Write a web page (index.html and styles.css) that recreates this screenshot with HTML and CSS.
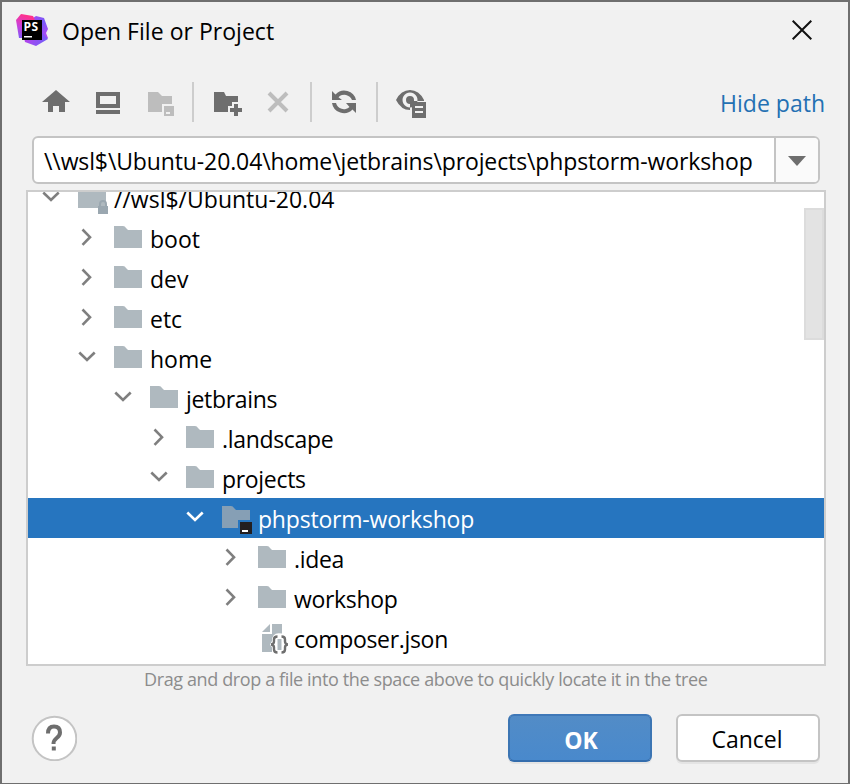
FILE: index.html
```html
<!DOCTYPE html>
<html lang="en">
<head>
    <meta charset="UTF-8">
    <title>Open File or Project</title>
    <link rel="stylesheet" href="styles.css">
</head>
<body>

    <!-- shared icon shapes -->
    <svg class="symbols" width="0" height="0">
        <symbol id="folder" viewBox="0 0 32 32"><path d="M2 4h9q2 0 3 2l2 2h14v18H2z"/></symbol>
        <symbol id="closed" viewBox="0 0 32 32"><path d="M11.500 8.500l7.500 7.700-7.500 7.700"/></symbol>
        <symbol id="opened" viewBox="0 0 32 32"><path d="M8.300 11.500l7.700 7.500 7.700-7.500"/></symbol>
    </svg>

    <div class="dialog">
        <div class="titlebar">
            <svg class="logo" width="32" height="32" viewBox="0 0 32 32">
                <defs>
                    <linearGradient id="purple" x1="0" y1="0" x2="0.6" y2="1">
                        <stop offset="0" stop-color="#b345f1"/>
                        <stop offset="0.5" stop-color="#765af8"/>
                        <stop offset="1" stop-color="#b345f1"/>
                    </linearGradient>
                    <linearGradient id="pink" x1="0.3" y1="0" x2="0" y2="1">
                        <stop offset="0" stop-color="#ff318c"/>
                        <stop offset="0.5" stop-color="#c840dc"/>
                        <stop offset="1" stop-color="#765af8"/>
                    </linearGradient>
                    <linearGradient id="violet" x1="0" y1="0" x2="1" y2="0.3">
                        <stop offset="0" stop-color="#c23ee8"/>
                        <stop offset="1" stop-color="#765af8"/>
                    </linearGradient>
                </defs>
                <path fill="url(#purple)" d="M17 4l3-2 8 2 4 11-2 4 2 5-8 4H12z"/>
                <path fill="url(#violet)" d="M8 24l18-6 6 7-12 7-11-4z"/>
                <path fill="url(#pink)" d="M0 6l5-6 12 2 2 4-9 18-7 0z"/>
                <path d="M6 6h20v20H6z"/>
                <path fill="#fff" d="M8 22h8v1.500H8z"/>
                <text class="logo-text" x="7.500" y="16.800">PS</text>
            </svg>
            <h1 class="title">Open File or Project</h1>
            <svg class="close" width="20" height="20" viewBox="0 0 20 20"><path d="M.7.700l18.600 18.600M19.300.700L.7 19.300"/></svg>
        </div>

        <div class="toolbar">
            <svg class="tool" viewBox="0 0 32 32"><path d="M16 4l14 12h-5v10h-6v-6h-6v6H8V16H2z"/></svg>
            <svg class="tool" viewBox="0 0 32 32"><path fill-rule="evenodd" d="M4 6h24v16H4zM8 10v8h16v-8zM4 24h24v4H4z"/></svg>
            <svg class="tool disabled" viewBox="0 0 32 32"><path d="M4 6h10l4 4h10v8H18v8H4z"/><path fill-rule="evenodd" d="M20 20h10v10H20zM22 26v2h4v-2z"/></svg>
            <span class="separator"></span>
            <svg class="tool" viewBox="0 0 32 32"><path d="M4 6h10l2 4h12v6h-6v4h-4v6H4z"/><path d="M24 18h4v4h4v4h-4v4h-4v-4h-4v-4h4z"/></svg>
            <svg class="tool disabled cross" viewBox="0 0 32 32"><path d="M7 7l18 18M25 7L7 25"/></svg>
            <span class="separator"></span>
            <svg class="tool" viewBox="0 0 32 32"><path d="M4 5l3.500 3.500A12 12 0 0 1 28 14h-4A8.200 8.200 0 0 0 10.500 11.200L14 14H4z"/><path d="M28 27l-3.500-3.500A12 12 0 0 1 4 17h4a8.200 8.200 0 0 0 13.500 4L18 17h10z"/></svg>
            <span class="separator"></span>
            <svg class="tool" viewBox="0 0 32 32"><path fill-rule="evenodd" d="M2 14q5-10 14-10t14 10v1H16v9Q7 24 2 14zM16 6.500a7.500 7.500 0 1 0 .01 0z"/><path d="M16 10a4 4 0 0 1 4 4v1h-4v3a4 4 0 0 1 0-8z"/><path fill-rule="evenodd" d="M18 16h14v16H18zM21 20v2h8v-2zM21 25v2h8v-2z"/></svg>
            <a class="hide-path">Hide path</a>
        </div>

        <div class="path-field">
            <span class="path">\\wsl$\Ubuntu-20.04\home\jetbrains\projects\phpstorm-workshop</span>
            <span class="dropdown"><svg width="18" height="10" viewBox="0 0 18 10"><path d="M0 0h18L9 10z"/></svg></span>
        </div>

        <div class="tree">
            <ul class="rows">
                <li class="row level-0">
                    <svg class="arrow"><use href="#opened"/></svg>
                    <svg class="icon" viewBox="0 0 32 32"><path d="M2 4h9q2 0 3 2l2 2h14v16h-8v2H2z"/><path class="lock" d="M22 24h10v8H22z"/><path class="shackle" d="M24 24v-2a3 3 0 0 1 6 0v2"/></svg>
                    <span>//wsl$/Ubuntu-20.04</span>
                </li>
                <li class="row level-1"><svg class="arrow"><use href="#closed"/></svg><svg class="icon"><use href="#folder"/></svg><span>boot</span></li>
                <li class="row level-1"><svg class="arrow"><use href="#closed"/></svg><svg class="icon"><use href="#folder"/></svg><span>dev</span></li>
                <li class="row level-1"><svg class="arrow"><use href="#closed"/></svg><svg class="icon"><use href="#folder"/></svg><span>etc</span></li>
                <li class="row level-1"><svg class="arrow"><use href="#opened"/></svg><svg class="icon"><use href="#folder"/></svg><span>home</span></li>
                <li class="row level-2"><svg class="arrow"><use href="#opened"/></svg><svg class="icon"><use href="#folder"/></svg><span>jetbrains</span></li>
                <li class="row level-3"><svg class="arrow"><use href="#closed"/></svg><svg class="icon"><use href="#folder"/></svg><span>.landscape</span></li>
                <li class="row level-3"><svg class="arrow"><use href="#opened"/></svg><svg class="icon"><use href="#folder"/></svg><span>projects</span></li>
                <li class="row level-4 selected">
                    <svg class="arrow"><use href="#opened"/></svg>
                    <svg class="icon" viewBox="0 0 32 32"><path d="M2 4h9q2 0 3 2l2 2h14v10H18v8H2z"/><path fill="#231f20" d="M20 20h12v12H20z"/><path fill="#fff" d="M22 28h6v2h-6z"/></svg>
                    <span>phpstorm-workshop</span>
                </li>
                <li class="row level-5"><svg class="arrow"><use href="#closed"/></svg><svg class="icon"><use href="#folder"/></svg><span>.idea</span></li>
                <li class="row level-5"><svg class="arrow"><use href="#closed"/></svg><svg class="icon"><use href="#folder"/></svg><span>workshop</span></li>
                <li class="row level-5">
                    <svg class="arrow"></svg>
                    <svg class="icon" viewBox="0 0 32 32"><path d="M14 2v8H6z"/><path d="M16 2h10v9.500q-10-2-10 7.500l-2 3.500 2 3v4.500H6V12h10z"/><path d="M21.500 17h4v11h-4z"/><path class="braces" d="M21.500 14.500q-3.500 0-3.500 3v2q0 2.500-2.800 3 2.800.5 2.800 3v2q0 3 3.500 3M25.500 14.500q3.500 0 3.500 3v2q0 2.500 2.800 3-2.800.5-2.800 3v2q0 3-3.500 3"/></svg>
                    <span>composer.json</span>
                </li>
            </ul>
            <div class="scrollbar"></div>
        </div>

        <p class="hint">Drag and drop a file into the space above to quickly locate it in the tree</p>

        <div class="buttons">
            <svg class="help" width="46" height="46" viewBox="0 0 46 46">
                <circle cx="23.500" cy="23.500" r="21.800"/>
                <path class="hook" d="M17 18.500q0-7 6-7t6 6q0 3-3.300 5.500t-3.200 6"/>
                <path class="dot" d="M20.800 31.500h4v4h-4z"/>
            </svg>
            <button class="button primary">OK</button>
            <button class="button">Cancel</button>
        </div>
    </div>

</body>
</html>
```
FILE: styles.css
```css
* {
    box-sizing: border-box;
}

body {
    margin: 0;
    font-family: "Open Sans", "Noto Sans", sans-serif;
    font-size: 23px;
    letter-spacing: -0.12px;
    color: #000;
}

.symbols {
    position: absolute;
}

.dialog {
    width: 850px;
    height: 784px;
    background-color: #f1f1f1;
    border: 2px solid #6f6f6f;
    border-bottom-width: 1px;
    overflow: hidden;
}

.titlebar {
    display: flex;
    align-items: center;
    height: 56px;
    padding: 0 36px 0 14px;
}

.logo-text {
    font: bold 12px "Open Sans", sans-serif;
    letter-spacing: 0.5px;
    fill: #fff;
}

.title {
    flex: 1;
    margin: 2px 0 0 14px;
    font-size: 23px;
    font-weight: normal;
    letter-spacing: 0.03px;
}

.close {
    fill: none;
    stroke: #111;
    stroke-width: 2;
}

.toolbar {
    display: flex;
    align-items: center;
    height: 60px;
    margin-top: 14px;
    padding: 0 23px 0 38px;
}

.tool {
    width: 32px;
    height: 32px;
    margin-right: 20px;
    fill: #6e6e6e;
}

.tool.disabled {
    fill: #bdbdbd;
}

.tool.cross {
    fill: none;
    stroke: #bdbdbd;
    stroke-width: 4;
}

.separator {
    width: 2px;
    height: 40px;
    margin: 0 16px 0 -4px;
    background-color: #cdcdcd;
}

.hide-path {
    margin: 2px 0 0 auto;
    letter-spacing: 0;
    color: #2470b3;
}

.path-field {
    display: flex;
    width: 788px;
    height: 48px;
    margin: 4px 0 0 30px;
    background-color: #fff;
    border: 2px solid #c4c4c4;
    border-radius: 6px;
}

.path {
    flex: 1;
    padding-left: 10px;
    line-height: 47px;
    white-space: nowrap;
}

.dropdown {
    display: flex;
    align-items: center;
    justify-content: center;
    width: 44px;
    padding-top: 2px;
    background-color: #fafafa;
    border-left: 2px solid #c4c4c4;
    border-radius: 0 4px 4px 0;
    fill: #6e6e6e;
}

.tree {
    position: relative;
    width: 800px;
    height: 476px;
    margin: 6px 0 0 24px;
    background-color: #fff;
    border: 2px solid #cdcdcd;
    overflow: hidden;
}

.rows {
    margin: -14px 0 0;
    padding: 0;
    list-style: none;
}

.row {
    display: flex;
    height: 40px;
    line-height: 43px;
    letter-spacing: -0.32px;
    white-space: nowrap;
}

.level-0 { padding-left: 7px; letter-spacing: 0; }
.level-1 { padding-left: 43px; letter-spacing: 0; }
.level-2 { padding-left: 79px; }
.level-3 { padding-left: 115px; }
.level-4 { padding-left: 151px; }
.level-5 { padding-left: 187px; }

.arrow {
    width: 32px;
    height: 32px;
    margin: 3px 9px 0 0;
    fill: none;
    stroke: #7f7f7f;
    stroke-width: 2.6;
}

.icon {
    width: 32px;
    height: 32px;
    margin: 4px 6px 0 0;
    fill: #afb9bf;
}

.icon .lock {
    fill: #9aa7b0;
}

.shackle {
    fill: none;
    stroke: #9aa7b0;
    stroke-width: 2;
}

.braces {
    fill: none;
    stroke: #6e6e6e;
    stroke-width: 2.4;
}

.selected {
    background-color: #2675bf;
    letter-spacing: -0.2px;
    color: #fff;
}

.selected .arrow {
    stroke: #fff;
}

.selected .icon {
    fill: #869fb5;
}

.scrollbar {
    position: absolute;
    top: 16px;
    right: 0;
    width: 20px;
    height: 132px;
    background-color: #e3e3e3;
    border: 2px solid #dcdcdc;
}

.hint {
    margin: -1px 0 0 142px;
    font-size: 18px;
    line-height: 28px;
    letter-spacing: -0.38px;
    color: #8c8c8c;
    white-space: nowrap;
}

.buttons {
    display: flex;
    align-items: center;
    height: 48px;
    margin: 21px 28px 0 29px;
}

.help {
    margin-right: auto;
    fill: #fff;
    stroke: #c4c4c4;
    stroke-width: 2;
}

.help .hook {
    fill: none;
    stroke: #6e6e6e;
    stroke-width: 4;
}

.help .dot {
    fill: #6e6e6e;
    stroke: none;
}

.button {
    width: 144px;
    height: 48px;
    margin-left: 24px;
    padding: 2px 2px 0 0;
    background-color: #fff;
    border: 2px solid #c4c4c4;
    border-radius: 6px;
    box-shadow: 0 2px 0 #e4e4e4;
    font: inherit;
    letter-spacing: 0;
    color: #000;
}

.primary {
    padding: 3px 0 0 2px;
    background: linear-gradient(#528cc7, #4989cc);
    border-color: #3f78b8 #3c75b3 #346dad;
    font-weight: bold;
    color: #fff;
}
```
